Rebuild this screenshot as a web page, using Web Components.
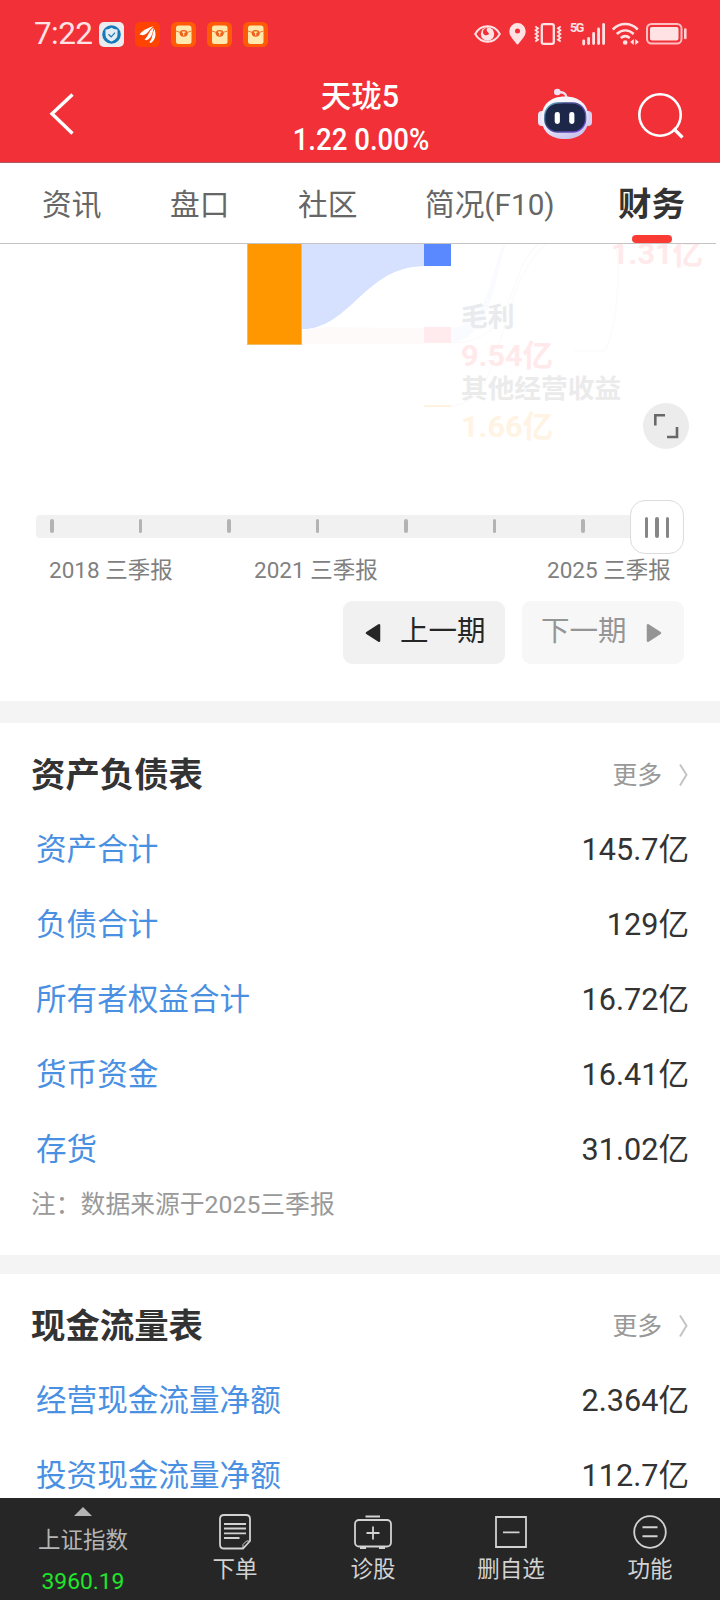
<!DOCTYPE html>
<html lang="zh-CN">
<head>
<meta charset="utf-8">
<meta name="viewport" content="width=device-width">
<title>天珑5</title>
<style>
  html, body {
    margin: 0;
    height: 1600px;
    overflow: hidden;
    background: #fff;
  }
  body {
    font-family: Roboto, "Noto Sans CJK SC", sans-serif;
    color: #333;
  }
</style>
</head>
<body>
<finance-page></finance-page>

<script>
const ICONS = {
  shield: [25, 25, `
    <rect width="25" height="25" rx="5" fill="#ecebee"/>
    <circle cx="12.5" cy="12.5" r="9.3" fill="#1879b8"/>
    <path d="M12.5 5.8q3 2 6 1.700v5c0 3.600-2.700 5.600-6 7.100-3.300-1.500-6-3.500-6-7.100v-5q3 .3 6-1.700z" fill="#e5edf3"/>
    <path d="M9.500 12.300l2.600 2.500 4-4.200" fill="none" stroke="#1879b8" stroke-width="1.200"/>`],
  wing: [25, 25, `
    <rect width="25" height="25" rx="5" fill="#ff4300"/>
    <g fill="#fff">
      <path d="M4.500 12.500C7 9 11 6.500 18.500 4.300 14.500 7 13 12.500 7.500 13.300z"/>
      <path d="M9.500 17.500C14 14 13.500 8.500 18.800 5.500 17.300 10 18 15.500 11.500 18.300z"/>
      <path d="M14.300 20.300C18 16.500 16.800 11.500 19.500 7c1.800 5 1.500 10.500-3.500 14z"/>
    </g>`],
  packet: [25, 25, `
    <rect width="25" height="25" rx="5.500" fill="#ff5a05"/>
    <rect x="5" y="3.500" width="15.500" height="18.500" rx="2.500" fill="#ffe9ae"/>
    <path d="M5 9q4 1.800 7.700 1.800t7.700-1.800" fill="none" stroke="#ee7b2d" stroke-width="1"/>
    <ellipse cx="12.700" cy="11.300" rx="4" ry="3.400" fill="#ef6219"/>
    <path d="M11 10.200h3.400M12.700 10.200v3.300" stroke="#ffe9ae" stroke-width="1.200"/>`],
  eye: [27, 20, `
    <path d="M1.200 10C7-.2 20-.2 25.800 10 20 20.200 7 20.200 1.200 10z" fill="none" stroke="currentColor" stroke-width="2"/>
    <circle cx="13.500" cy="10" r="6.700" fill="currentColor"/>
    <path d="M9 8.500a4 4 0 0 1 4.500-4.500q-2 2 .5 4.300t-1.500 3q-3 .2-3.500-2.800z" fill="#f23038"/>`],
  pin: [17, 22, `
    <path d="M8.500 0A8.200 8.200 0 0 0 .3 8.200C.3 13.500 5 17 7.200 20.500q1.300 1.800 2.600 0C12 17 16.700 13.500 16.700 8.200A8.200 8.200 0 0 0 8.500 0z" fill="currentColor"/>
    <circle cx="8.500" cy="8" r="2.500" fill="#f23038"/>`],
  vibrate: [28, 22, `
    <rect x="7.800" y="1.200" width="12" height="19.600" rx="1.800" fill="none" stroke="currentColor" stroke-width="2.300"/>
    <path d="M1.300 3.500l2.700 1.800-2.400 1.900 2.400 1.900-2.400 1.900 2.400 1.900-2.400 1.900 2.400 1.900-2.700 1.800M26.700 3.500l-2.700 1.800 2.400 1.900-2.400 1.900 2.400 1.900-2.400 1.900 2.400 1.900-2.400 1.900 2.700 1.800" fill="none" stroke="currentColor" stroke-width="1.800"/>`],
  signal: [24, 22, `
    <path d="M1.700 18v3M6.600 15.500V20.500M11.600 10.500V20.500M16.600 6V20.500M21.600 1.500v19" stroke="currentColor" stroke-width="2.800" stroke-linecap="round"/>`],
  wifi: [28, 22, `
    <g fill="none" stroke="currentColor" stroke-width="2.600">
      <path d="M.8 6.500C8-.8 18.500-.8 25.700 6.500"/>
      <path d="M4.800 11C10 6.300 16.500 6.300 21.700 11"/>
      <path d="M8.800 15c3-2.500 6-2.500 9 0"/>
    </g>
    <circle cx="13.200" cy="19.500" r="2.300" fill="currentColor"/>
    <path d="M21.800 16v6l-3.600-3zM23.300 16v6l3.600-3z" fill="currentColor"/>`],
  battery: [42, 22, `
    <rect x="1" y="1" width="34.500" height="19.500" rx="4.500" fill="none" stroke="currentColor" stroke-width="2" opacity=".8"/>
    <rect x="4" y="4" width="28.500" height="13.500" rx="2" fill="currentColor"/>
    <path d="M39.300 6.500v8.500" stroke="currentColor" stroke-width="2.600" stroke-linecap="round" opacity=".9"/>`],
  back: [24, 42, `
    <path d="M22.500 1.500L2 20.800l20.500 19.700" fill="none" stroke="#fff" stroke-width="3.400"/>`],
  robot: [56, 52, `
    <defs>
      <linearGradient id="shell" x2=".5" y2="1">
        <stop stop-color="#fff"/><stop offset=".6" stop-color="#eeeafb"/><stop offset="1" stop-color="#cbc7ee"/>
      </linearGradient>
      <linearGradient id="rim" x2="1" y2=".6">
        <stop stop-color="#7ed0e6"/><stop offset=".35" stop-color="#3c4a80"/><stop offset="1" stop-color="#6c4bd0"/>
      </linearGradient>
    </defs>
    <path d="M21 4.500q8-1 8.500 5" fill="none" stroke="#f0dcea" stroke-width="2.500"/>
    <circle cx="20.300" cy="4" r="3.300" fill="#f0e2f4"/>
    <rect x="1" y="23" width="8" height="15" rx="4" fill="#ece7f8"/>
    <rect x="47" y="23" width="8" height="15" rx="4" fill="#d6d0f3"/>
    <path d="M28 8.500C43 8.500 51.500 17 51.500 30S43 51 28 51 4.500 43 4.500 30 13 8.500 28 8.500z" fill="url(#shell)"/>
    <rect x="7.700" y="15" width="41" height="29" rx="13" fill="#1d2749" stroke="url(#rim)" stroke-width="1.300"/>
    <rect x="17.700" y="24" width="5.200" height="12" rx="2.400" fill="#fff"/>
    <rect x="32.200" y="24" width="5.200" height="12" rx="2.400" fill="#fff"/>`],
  search: [46, 46, `
    <circle cx="22" cy="22" r="20.700" fill="none" stroke="#fff" stroke-width="2.600"/>
    <path d="M35.500 35.500L44.500 44.500" stroke="#fff" stroke-width="3.200"/>`],
  expand: [46, 46, `
    <circle cx="23" cy="23" r="23" fill="#ececec"/>
    <path d="M12.300 22.500V12.300H22M24 34H34V24" fill="none" stroke="#686868" stroke-width="2.600"/>`],
  prev: [16, 20, `
    <path d="M2 10L14 2.200V17.800z" fill="currentColor" stroke="currentColor" stroke-width="2.500" stroke-linejoin="round"/>`],
  next: [16, 20, `
    <path d="M14 10L2 2.200V17.800z" fill="currentColor" stroke="currentColor" stroke-width="2.500" stroke-linejoin="round"/>`],
  more: [9, 22, `
    <path d="M1 .5L7.500 10.800 1 21.500" fill="none" stroke="#c4c4c4" stroke-width="2"/>`],
  up: [18, 9, `<path d="M0 9L9 0l9 9z" fill="#b5b5b5"/>`],
  order: [32, 36, `
    <g fill="none" stroke="currentColor">
      <path d="M5 1h22q4 0 4 4v22L24 34.500H5q-4 0-4-4V5q0-4 4-4z" stroke-width="1.800"/>
      <path d="M24 34v-3.500l3.500-3.500H31" stroke-width="1"/>
      <path d="M5 10h22M5 14.500h22M5 19.300h22M5 24h15.500" stroke-width="1.800"/>
    </g>`],
  diagnose: [38, 34, `
    <g fill="none" stroke="currentColor" stroke-width="1.800">
      <rect x="1" y="5" width="36" height="26.500" rx="4"/>
      <path d="M11.500 1.500h14.500M6 33h6M25 33h6M12.500 18h13M19 11.500v13"/>
    </g>`],
  remove: [32, 32, `
    <path d="M1 1h30v30H1zM8 16.300h16.500" fill="none" stroke="currentColor" stroke-width="1.800"/>`],
  menu: [34, 34, `
    <circle cx="17" cy="17" r="15.800" fill="none" stroke="currentColor" stroke-width="1.800"/>
    <path d="M9.500 12.300h15M9.500 21.300h15" stroke="currentColor" stroke-width="2"/>`],
};

class AppIcon extends HTMLElement {
  connectedCallback() {
    const [w, h, body] = ICONS[this.getAttribute('name')];
    this.attachShadow({ mode: 'open' }).innerHTML = `
      <style>
        :host { display: block; flex: none; }
        svg { display: block; overflow: visible; }
      </style>
      <svg width="${w}" height="${h}" viewBox="0 0 ${w} ${h}">${body}</svg>
    `;
  }
}
customElements.define('app-icon', AppIcon);

class StatusBar extends HTMLElement {
  connectedCallback() {
    this.attachShadow({ mode: 'open' }).innerHTML = `
      <style>
        :host {
          display: flex;
          justify-content: space-between;
          height: 68px;
          padding: 0 32px 0 34px;
          box-sizing: border-box;
          color: #ffe3e4;
        }
        .left, .right { display: flex; align-items: center; }
        .time { width: 65px; font-size: 31.500px; line-height: 70px; letter-spacing: -.600px; }
        .apps { display: flex; gap: 11px; }
        .net {
          align-self: flex-start;
          margin: 21px 0 0 8px;
          width: 12px;
          font: bold 12.500px/14px "Liberation Sans Narrow", Roboto, sans-serif;
          letter-spacing: -1.500px;
          white-space: nowrap;
        }
      </style>
      <div class="left">
        <span class="time">7:22</span>
        <div class="apps">
          <app-icon name="shield"></app-icon>
          <app-icon name="wing"></app-icon>
          <app-icon name="packet"></app-icon>
          <app-icon name="packet"></app-icon>
          <app-icon name="packet"></app-icon>
        </div>
      </div>
      <div class="right">
        <app-icon name="eye"></app-icon>
        <app-icon name="pin" style="margin-left:8px"></app-icon>
        <app-icon name="vibrate" style="margin-left:8px"></app-icon>
        <span class="net">5G</span>
        <app-icon name="signal"></app-icon>
        <app-icon name="wifi" style="margin-left:6px"></app-icon>
        <app-icon name="battery" style="margin-left:6px"></app-icon>
      </div>
    `;
  }
}
customElements.define('status-bar', StatusBar);

class StockHeader extends HTMLElement {
  connectedCallback() {
    this.attachShadow({ mode: 'open' }).innerHTML = `
      <style>
        :host {
          display: grid;
          grid-template-columns: 240px 1fr 240px;
          height: 95px;
          box-sizing: border-box;
          border-bottom: 1px solid #b0595d;
          color: #fff;
          text-align: center;
          font-weight: 500;
        }
        .back { padding: 25px 0 0 50px; }
        .name { margin-top: 7px; font-size: 30.500px; line-height: 44px; white-space: nowrap; }
        .price {
          margin-left: 2px;
          font-size: 30.500px;
          line-height: 42px;
          white-space: nowrap;
          transform: scaleX(.905);
        }
        .tools { display: flex; gap: 45px; padding: 20px 0 0 57px; }
        .tools app-icon + app-icon { margin-top: 5px; }
      </style>
      <app-icon class="back" name="back"></app-icon>
      <div>
        <div class="name">${this.getAttribute('name')}</div>
        <div class="price">${this.getAttribute('price')}</div>
      </div>
      <div class="tools">
        <app-icon name="robot"></app-icon>
        <app-icon name="search"></app-icon>
      </div>
    `;
  }
}
customElements.define('stock-header', StockHeader);

class TabBar extends HTMLElement {
  connectedCallback() {
    this.attachShadow({ mode: 'open' }).innerHTML = `
      <style>
        :host {
          display: flex;
          gap: 69px;
          width: 716px;
          height: 81px;
          box-sizing: border-box;
          padding-left: 42px;
          border-bottom: 1px solid #c4c4c4;
          font-size: 29.700px;
          line-height: 83px;
          color: #666;
          white-space: nowrap;
        }
        .tab { width: 59px; }
        .wide { width: 130px; margin-left: -1px; }
        .active {
          display: flex;
          flex-direction: column;
          align-items: center;
          width: 67px;
          margin-left: -6px;
          font-size: 33.500px;
          font-weight: bold;
          color: #333;
        }
        .active i { width: 40px; height: 8px; margin-top: -11px; border-radius: 4px; background: #f93b34; }
      </style>
      <span class="tab">资讯</span>
      <span class="tab">盘口</span>
      <span class="tab">社区</span>
      <span class="tab wide">简况(F10)</span>
      <span class="tab active">财务<i></i></span>
    `;
  }
}
customElements.define('tab-bar', TabBar);

// lower part of the income sankey; the upper part is scrolled under the tabs
class FlowChart extends HTMLElement {
  connectedCallback() {
    this.attachShadow({ mode: 'open' }).innerHTML = `
      <style>
        :host { display: block; position: relative; height: 256px; overflow: hidden; }
        svg { display: block; }
        text { font-weight: bold; font-size: 26.700px; }
        .num { font-size: 30px; }
        app-icon { position: absolute; left: 643px; top: 159px; }
      </style>
      <svg width="720" height="256" viewBox="0 0 720 256">
        <path d="M302 0H424V22C365 22 350 85 302 85z" fill="#d6e0ff"/>
        <path d="M302 85q12 0 20-2l102 1v16H302z" fill="#fffafa"/>
        <path d="M302 0H424V22C365 22 350 85 302 85z" fill="#d6e0ff"/>
        <rect x="247.500" y="-5" width="54" height="105.500" fill="#ff9800" stroke="#f0bd62"/>
        <rect x="424" y="0" width="27" height="22" fill="#5a88ff"/>
        <rect x="424" y="83" width="27" height="16" fill="#ffebed"/>
        <rect x="424" y="161" width="27" height="2" fill="#fff3e0"/>
        <path d="M451 84C487 82 489 35 503 0h3C494 34 491 95 451 99z" fill="#fafbff"/>
        <g fill="none" stroke="#fbfbfc" stroke-width="1.500">
          <path d="M451 162C508 160 494 43 546 0"/>
          <path d="M451 99C520 99 505 25 539 0"/>
          <path d="M616 0C623 50 610 107 603 107H574"/>
        </g>
        <text x="461" y="82" fill="#e9eaed">毛利</text>
        <text class="num" x="461" y="122" fill="#ffe9ea" textLength="92" lengthAdjust="spacingAndGlyphs">9.54亿</text>
        <text x="461" y="154" fill="#ebebeb">其他经营收益</text>
        <text class="num" x="461" y="193" fill="#fff3e4" textLength="92" lengthAdjust="spacingAndGlyphs">1.66亿</text>
        <text class="num" x="611" y="19.500" fill="#ffe9ea" textLength="92" lengthAdjust="spacingAndGlyphs">1.31亿</text>
      </svg>
      <app-icon name="expand"></app-icon>
    `;
  }
}
customElements.define('flow-chart', FlowChart);

class PeriodSlider extends HTMLElement {
  connectedCallback() {
    this.attachShadow({ mode: 'open' }).innerHTML = `
      <style>
        :host { display: block; height: 201px; padding: 0 36px; }
        .slider { display: flex; align-items: center; }
        .track {
          display: flex;
          align-items: center;
          justify-content: space-between;
          flex: 1;
          height: 23px;
          margin: -1px -12px 0 0;
          padding: 0 57px 2px 14px;
          box-sizing: border-box;
          border-radius: 4px;
          background: #f1f1f1;
        }
        .track i { width: 3.500px; height: 14px; border-radius: 2px; background: #b3b3b3; }
        .handle {
          display: flex;
          align-items: center;
          justify-content: center;
          gap: 7px;
          width: 52px;
          height: 52px;
          border: 1px solid #dcdcdc;
          border-radius: 15px;
          background: #fff;
        }
        .handle i { width: 3.500px; height: 21px; border-radius: 2px; background: #868686; }
        .labels {
          display: grid;
          grid-template-columns: 205px 293px 1fr;
          padding-left: 13px;
          font-size: 22.500px;
          line-height: 32px;
          color: #808080;
          white-space: nowrap;
        }
        .buttons { display: flex; justify-content: flex-end; gap: 17px; padding-top: 15px; }
        .btn {
          display: flex;
          align-items: center;
          width: 162px;
          height: 63px;
          box-sizing: border-box;
          border-radius: 9px;
          background: #f1f1f1;
          color: #262626;
          font-size: 28.500px;
          line-height: 60px;
        }
        .btn span { padding-bottom: 1px; }
        .prev { padding-left: 22px; gap: 19px; }
        .next { padding-left: 19px; gap: 19px; background: #f7f7f7; color: #959595; }
      </style>
      <div class="slider">
        <div class="track"><i></i><i></i><i></i><i></i><i></i><i></i><i></i></div>
        <div class="handle"><i></i><i></i><i></i></div>
      </div>
      <div class="labels">
        <span>2018 三季报</span><span>2021 三季报</span><span>2025 三季报</span>
      </div>
      <div class="buttons">
        <div class="btn prev"><app-icon name="prev"></app-icon><span>上一期</span></div>
        <div class="btn next"><span>下一期</span><app-icon name="next"></app-icon></div>
      </div>
    `;
  }
}
customElements.define('period-slider', PeriodSlider);

class ReportSection extends HTMLElement {
  connectedCallback() {
    this.attachShadow({ mode: 'open' }).innerHTML = `
      <style>
        :host { display: block; border-top: 22px solid #f4f4f4; }
        .head {
          display: flex;
          align-items: center;
          height: 89px;
          padding: 15px 32px 0 31px;
          box-sizing: border-box;
        }
        h2 { flex: 1; margin: 0; font-size: 34.400px; line-height: 50px; color: #333; }
        .more { margin: -4px 17px 0 0; font-size: 24.800px; color: #999; }
      </style>
      <div class="head">
        <h2>${this.getAttribute('heading')}</h2>
        <span class="more">更多</span>
        <app-icon name="more"></app-icon>
      </div>
      <slot></slot>
    `;
  }
}
customElements.define('report-section', ReportSection);

class ReportRow extends HTMLElement {
  connectedCallback() {
    this.attachShadow({ mode: 'open' }).innerHTML = `
      <style>
        :host {
          display: flex;
          justify-content: space-between;
          height: 75px;
          padding: 0 31px 0 36px;
          font-size: 30.600px;
          line-height: 75px;
          color: #333;
        }
        .label { color: #4a90e2; }
      </style>
      <span class="label">${this.getAttribute('label')}</span>
      <span><slot></slot></span>
    `;
  }
}
customElements.define('report-row', ReportRow);

class ReportNote extends HTMLElement {
  connectedCallback() {
    this.attachShadow({ mode: 'open' }).innerHTML = `
      <style>
        :host {
          display: block;
          height: 68px;
          padding-left: 31px;
          font-size: 24.800px;
          line-height: 36px;
          color: #999;
        }
      </style>
      <slot></slot>
    `;
  }
}
customElements.define('report-note', ReportNote);

class BottomBar extends HTMLElement {
  connectedCallback() {
    this.attachShadow({ mode: 'open' }).innerHTML = `
      <style>
        :host {
          display: grid;
          grid-template-columns: 166px 138px 138px 138px 140px;
          height: 102px;
          background: #262626;
          color: #d2d2d2;
          font-size: 22.500px;
          line-height: 32px;
          text-align: center;
        }
        .index, .item { display: flex; flex-direction: column; align-items: center; }
        .index { padding-top: 9px; color: #b5b5b5; }
        .index .name { margin-top: 7px; line-height: 34px; }
        .index .value { margin-top: 8px; color: #1fe62b; font-size: 22.800px; line-height: 34px; }
        .pic { display: flex; align-items: center; justify-content: center; height: 38px; padding: 15px 0 2px; }
      </style>
      <div class="index">
        <app-icon name="up"></app-icon>
        <span class="name">上证指数</span>
        <span class="value">3960.19</span>
      </div>
      <div class="item"><div class="pic"><app-icon name="order"></app-icon></div>下单</div>
      <div class="item"><div class="pic"><app-icon name="diagnose"></app-icon></div>诊股</div>
      <div class="item"><div class="pic"><app-icon name="remove"></app-icon></div>删自选</div>
      <div class="item"><div class="pic"><app-icon name="menu"></app-icon></div>功能</div>
    `;
  }
}
customElements.define('bottom-bar', BottomBar);

class FinancePage extends HTMLElement {
  connectedCallback() {
    this.attachShadow({ mode: 'open' }).innerHTML = `
      <style>
        :host { display: flex; flex-direction: column; width: 720px; height: 1600px; }
        .top { flex: none; background: #f23038; }
        main { flex: 1; min-height: 0; overflow: hidden; }
        report-section + report-section { border-top-width: 19px; }
      </style>
      <div class="top">
        <status-bar></status-bar>
        <stock-header name="天珑5" price="1.22 0.00%"></stock-header>
      </div>
      <tab-bar></tab-bar>
      <main>
        <flow-chart></flow-chart>
        <period-slider></period-slider>
        <report-section heading="资产负债表">
          <report-row label="资产合计">145.7亿</report-row>
          <report-row label="负债合计">129亿</report-row>
          <report-row label="所有者权益合计">16.72亿</report-row>
          <report-row label="货币资金">16.41亿</report-row>
          <report-row label="存货">31.02亿</report-row>
          <report-note>注：数据来源于2025三季报</report-note>
        </report-section>
        <report-section heading="现金流量表">
          <report-row label="经营现金流量净额">2.364亿</report-row>
          <report-row label="投资现金流量净额">112.7亿</report-row>
        </report-section>
      </main>
      <bottom-bar></bottom-bar>
    `;
  }
}
customElements.define('finance-page', FinancePage);
</script>
</body>
</html>
